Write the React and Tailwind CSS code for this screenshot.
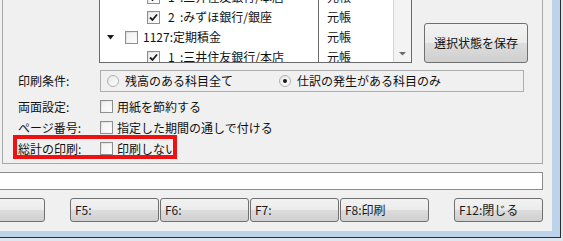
import React from 'react';

const Check = ({ checked }) => (
  <span className="flex h-[13px] w-[13px] shrink-0 items-center justify-center border border-[#8e8f8f] bg-[linear-gradient(135deg,#dcdcdc,#ffffff)]">
    <span className="flex h-[9px] w-[9px] items-center justify-center bg-[linear-gradient(135deg,#f2f2f2,#fbfbfb)]">
      {checked && (
        <svg width="9" height="9" viewBox="0 0 9 9">
          <path d="M1 4.5 L3.5 7 L8 1.5" fill="none" stroke="#1a1a1a" strokeWidth="1.8" />
        </svg>
      )}
    </span>
  </span>
);

const Radio = ({ checked }) => (
  <span className="flex h-[12px] w-[12px] shrink-0 items-center justify-center rounded-full border border-[#b0b0b0] bg-[linear-gradient(135deg,#e6e6e6,#ffffff)]">
    {checked && <span className="h-[4px] w-[4px] rounded-full bg-[#1a1a1a]" />}
  </span>
);

const Btn = ({ className, children }) => (
  <div
    className={`flex h-[24px] w-[89px] shrink-0 items-center rounded-[3px] border border-[#707070] bg-[linear-gradient(#f2f2f2_0%,#ebebeb_50%,#dddddd_50%,#cfcfcf_100%)] pl-1 text-[12px] text-[#1a1a1a] ${className || ''}`}
  >
    {children}
  </div>
);

const rows = [
  { kind: 'child', checked: true, no: '1', name: ':三井住友銀行/本店' },
  { kind: 'child', checked: true, no: '2', name: ':みずほ銀行/銀座' },
  { kind: 'parent', checked: false, name: '1127:定期積金' },
  { kind: 'child', checked: true, no: '1', name: ':三井住友銀行/本店' },
];

export default function App() {
  return (
    <div className="h-[241px] w-[563px] overflow-hidden bg-[#dfe6ee] font-['Noto_Sans_CJK_JP',sans-serif] text-[12px] leading-none text-[#111]">
      <div className="h-[238px] w-[561px] border-r border-b border-[#2e2e2e] bg-[#bcd3ea]">
        <div className="relative flex h-[231px] w-[552px] flex-col bg-[#f0f0f0]">
          {/* Group */}
          <div className="ml-[2px] h-[164px] w-[541px] border-r border-b border-l border-[#a8a8a8]">
            {/* list + save button */}
            <div className="flex h-[63px] items-end">
              <div className="ml-[96px] flex h-[63px] w-[313px] border-r border-b border-l border-[#6a6a6a] bg-white">
                <div className="h-[62px] w-[293px] overflow-hidden">
                  <div className="-mt-[13px]">
                    {rows.map((r, i) => (
                      <div key={i} className="flex h-[20px]">
                        <div className="flex h-[20px] w-[219px] items-center border-r border-[#6a6a6a]">
                          {r.kind === 'parent' ? (
                            <>
                              <svg width="7" height="5" viewBox="0 0 7 5" className="ml-[7px]">
                                <polygon points="0,0 7,0 3.5,4.5" fill="#1a1a1a" />
                              </svg>
                              <span className="ml-[11px]">
                                <Check checked={r.checked} />
                              </span>
                              <span className="ml-[5px]">{r.name}</span>
                            </>
                          ) : (
                            <>
                              <span className="ml-[47px]">
                                <Check checked={r.checked} />
                              </span>
                              <span className="ml-[8px] w-[12px]">{r.no}</span>
                              <span>{r.name}</span>
                            </>
                          )}
                        </div>
                        <div className="flex items-center pl-[8px]">元帳</div>
                      </div>
                    ))}
                  </div>
                </div>
                <div className="flex w-[18px] flex-col justify-end border-l border-[#d4d4d4] bg-[#f3f3f3]">
                  <div className="flex h-[17px] items-center justify-center">
                    <svg width="7" height="4" viewBox="0 0 7 4">
                      <polygon points="0,0 7,0 3.5,3.5" fill="#6b6b6b" />
                    </svg>
                  </div>
                </div>
              </div>
              <div className="ml-[12px] flex h-[40px] w-[104px] items-center justify-center rounded-[3px] border border-[#707070] bg-[linear-gradient(#f2f2f2_0%,#ebebeb_50%,#dddddd_50%,#cfcfcf_100%)] text-[12px]">
                選択状態を保存
              </div>
            </div>

            {/* print condition */}
            <div className="mt-[7px] flex h-[22px] items-center">
              <div className="ml-[15px] w-[82px]">印刷条件:</div>
              <div className="flex h-[22px] w-[424px] items-center border border-[#adadad]">
                <span className="ml-[6px]">
                  <Radio />
                </span>
                <span className="ml-[6px]">残高のある科目全て</span>
                <span className="ml-[46px]">
                  <Radio checked />
                </span>
                <span className="ml-[6px]">仕訳の発生がある科目のみ</span>
              </div>
            </div>

            <div className="mt-[4px] flex h-[21px] items-center">
              <div className="ml-[15px] w-[82px]">両面設定:</div>
              <Check />
              <span className="ml-[4px]">用紙を節約する</span>
            </div>
            <div className="flex h-[21px] items-center">
              <div className="ml-[15px] w-[82px]">ページ番号:</div>
              <Check />
              <span className="ml-[4px]">指定した期間の通しで付ける</span>
            </div>
            <div className="flex h-[21px] items-center">
              <div className="ml-[15px] w-[82px]">総計の印刷:</div>
              <Check />
              <span className="ml-[4px]">印刷しない</span>
            </div>
          </div>

          {/* highlight */}
          <div className="absolute top-[135px] left-[13px] h-[24px] w-[164px] border-[4px] border-[#ee1111]" />

          {/* text box */}
          <div className="mt-[8px] h-[18px] w-[543px] border-t border-r border-b border-[#8c8c8c] bg-white" />

          {/* function keys */}
          <div className="mt-[8px] flex">
            <Btn className="-ml-[44px]" />
            <Btn className="ml-[25px]">F5:</Btn>
            <Btn className="ml-[1px]">F6:</Btn>
            <Btn className="ml-[1px]">F7:</Btn>
            <Btn className="ml-[1px]">F8:印刷</Btn>
            <Btn className="ml-[25px]">F12:閉じる</Btn>
          </div>
        </div>
      </div>
    </div>
  );
}
